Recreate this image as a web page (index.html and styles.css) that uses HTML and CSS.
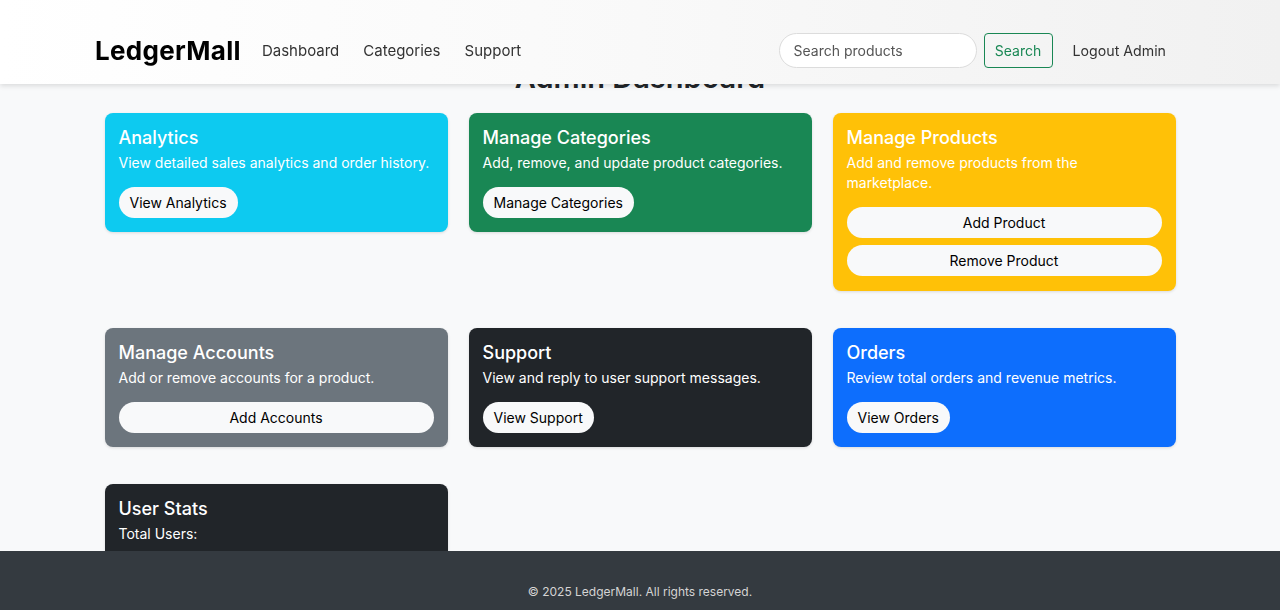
FILE: index.html
```html
<!DOCTYPE html>
<html lang="en">
<head>
<meta charset="utf-8">
<title>LedgerMall Admin Dashboard</title>
<link rel="stylesheet" href="styles.css">
</head>
<body>
<header class="topbar">
  <a class="brand" href="#">LedgerMall</a>
  <nav class="nav">
    <a href="#">Dashboard</a>
    <a href="#">Categories</a>
    <a href="#">Support</a>
  </nav>
  <div class="actions">
    <form class="search">
      <input class="search-input" type="text" placeholder="Search products">
      <button class="search-btn" type="button">Search</button>
    </form>
    <a class="logout" href="#">Logout Admin</a>
  </div>
</header>

<main class="page">
  <h1 class="title">Admin Dashboard</h1>
  <div class="grid">
    <section class="card info">
      <h2>Analytics</h2>
      <p>View detailed sales analytics and order history.</p>
      <div class="btns"><a class="pill" href="#">View Analytics</a></div>
    </section>
    <section class="card success">
      <h2>Manage Categories</h2>
      <p>Add, remove, and update product categories.</p>
      <div class="btns"><a class="pill" href="#">Manage Categories</a></div>
    </section>
    <section class="card warning">
      <h2>Manage Products</h2>
      <p>Add and remove products from the marketplace.</p>
      <div class="btns full">
        <a class="pill" href="#">Add Product</a>
        <a class="pill" href="#">Remove Product</a>
      </div>
    </section>
    <section class="card secondary">
      <h2>Manage Accounts</h2>
      <p>Add or remove accounts for a product.</p>
      <div class="btns full"><a class="pill" href="#">Add Accounts</a></div>
    </section>
    <section class="card dark">
      <h2>Support</h2>
      <p>View and reply to user support messages.</p>
      <div class="btns"><a class="pill" href="#">View Support</a></div>
    </section>
    <section class="card primary">
      <h2>Orders</h2>
      <p>Review total orders and revenue metrics.</p>
      <div class="btns"><a class="pill" href="#">View Orders</a></div>
    </section>
    <section class="card dark">
      <h2>User Stats</h2>
      <p class="stat">Total Users:</p>
      <p class="stat">Total Orders:</p>
      <p class="stat">Total Revenue:</p>
    </section>
  </div>
</main>

<footer class="footer">
  <p>© 2025 LedgerMall. All rights reserved.</p>
</footer>
</body>
</html>
```

FILE: styles.css
```css
* { box-sizing: border-box; }

html, body {
  margin: 0;
  padding: 0;
}

body {
  background: #f8f9fa;
  color: #212529;
  font-family: Inter, "Open Sans", "Liberation Sans", sans-serif;
  font-size: 14px;
}

a { text-decoration: none; color: inherit; }

.topbar {
  position: fixed;
  top: 0;
  left: 0;
  right: 0;
  height: 84px;
  z-index: 10;
  display: flex;
  align-items: center;
  padding: 16px 106px 0 95px;
  background: linear-gradient(90deg, #ffffff 0%, #f9f9f9 50%, #f1f1f1 100%);
  box-shadow: 0 2px 5px rgba(0, 0, 0, 0.12);
}

.brand {
  font-size: 26px;
  font-weight: 700;
  color: #000;
  letter-spacing: 0.3px;
  margin-right: 21px;
}

.nav {
  display: flex;
  gap: 24px;
}

.nav a {
  font-size: 15px;
  color: #333;
}

.actions {
  margin-left: auto;
  display: flex;
  align-items: center;
}

.search {
  display: flex;
  gap: 7px;
  margin: 0;
}

.search-input {
  width: 198px;
  height: 35px;
  border: 1px solid #dcdcdc;
  border-radius: 18px;
  background: #fff;
  padding: 0 14px;
  font: inherit;
  font-size: 14px;
  color: #333;
  outline: none;
}

.search-input::placeholder { color: #555; }

.search-btn {
  height: 35px;
  width: 69px;
  border: 1px solid #198754;
  border-radius: 4px;
  background: transparent;
  color: #198754;
  font: inherit;
  font-size: 14px;
  padding: 0;
}

.logout {
  margin-left: 12px;
  padding: 0 8px;
  font-size: 14.2px;
  color: #333;
}

.page {
  padding-top: 59px;
}

.title {
  margin: 0 0 16px;
  text-align: center;
  font-size: 29px;
  line-height: 38px;
  font-weight: 600;
  color: #212529;
}

.grid {
  width: 1071px;
  margin: 0 auto;
  display: grid;
  grid-template-columns: repeat(3, 1fr);
  column-gap: 21px;
  row-gap: 37px;
  align-items: start;
  padding-bottom: 120px;
}

.card {
  border-radius: 8px;
  padding: 14px 14px 14px;
  color: #fff;
  box-shadow: 0 1px 3px rgba(0, 0, 0, 0.12);
}

.card h2 {
  margin: 0 0 4px;
  font-size: 18px;
  line-height: 21px;
  font-weight: 500;
}

.card p {
  margin: 0 0 14px;
  font-size: 14px;
  line-height: 20px;
  padding-top: 1px;
}

.card p.stat {
  margin: 0 0 6px;
}

.info { background: #0dcaf0; }
.success { background: #198754; }
.warning { background: #ffc107; }
.secondary { background: #6c757d; }
.dark { background: #212529; }
.primary { background: #0d6efd; }

.btns {
  display: flex;
  flex-direction: column;
  align-items: flex-start;
  gap: 7px;
}

.btns.full { align-items: stretch; }

.pill {
  display: inline-flex;
  align-items: center;
  justify-content: center;
  height: 31px;
  padding: 0 11px;
  border-radius: 16px;
  background: #f8f9fa;
  color: #000;
  font-size: 14px;
}

.warning .btns { margin-bottom: 1px; }

.footer {
  position: fixed;
  left: 0;
  right: 0;
  bottom: 0;
  height: 59px;
  background: #343a40;
  z-index: 5;
}

.footer p {
  margin: 0;
  padding-top: 33px;
  text-align: center;
  font-size: 12px;
  line-height: 16px;
  color: #d4d4d4;
}
```
